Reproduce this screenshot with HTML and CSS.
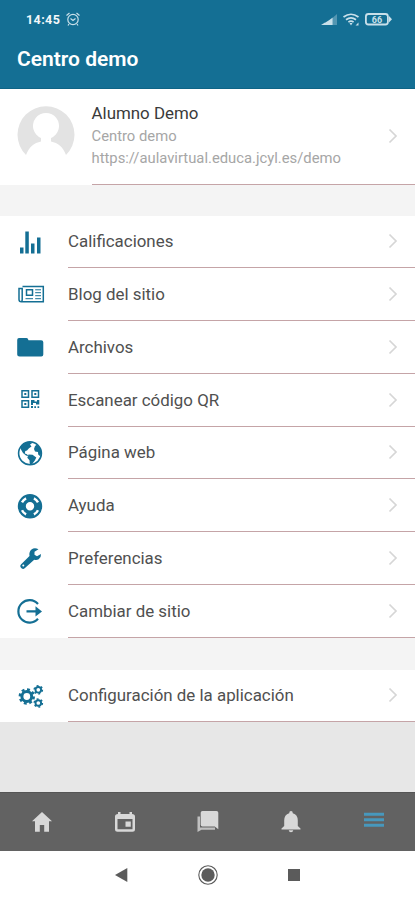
FILE: index.html
```html
<!DOCTYPE html>
<html lang="es">
<head>
<meta charset="utf-8">
<title>Centro demo</title>
<link rel="stylesheet" href="styles.css">
</head>
<body>
<svg class="defs" width="0" height="0"><defs>
<symbol id="chev" viewBox="0 0 12 18"><path d="M2.500 2.500l6.500 6.500-6.500 6.500" fill="none" stroke="currentColor" stroke-width="1.700"/></symbol>
</defs></svg>
<div class="app">
<header class="header">
  <div class="status">
    <span class="time">14:45</span>
    <svg class="alarm" width="16" height="16" viewBox="0 0 16 16" fill="none" stroke="currentColor" stroke-width="1.2"><circle cx="8" cy="8.5" r="5.2"/><path d="M1.5 4.5l3-2.5M14.5 4.5l-3-2.5M4 13l-1 1.5M12 13l1 1.5M5.5 7.5L8 9.5l2.5-2"/></svg>
    <svg class="signals" width="72" height="16" viewBox="0 0 72 16" fill="currentColor">
      <path d="M0 14l4-2.500V14zM4 11.700l4-2.500V14H4zM8 9.200l3.700-2.600V14H8z"/><path opacity=".35" d="M12 6.400l4-3.400v11h-4z"/>
      <g fill="none" stroke="currentColor" stroke-width="1.700"><path d="M22.500 6q7.500-5.500 15 0M25 8.700q5-3.700 10 0M27.400 11.200q2.600-2 5.200 0"/></g><path d="M28.500 12h3L30 14.500zM34.500 14.500l3-3v3z"/>
      <rect x="44.900" y="3" width="22" height="10.500" rx="2.500" fill="none" stroke="currentColor" stroke-width="1.800"/><path d="M68 5l3 3.200L68 11.500z"/>
      <text class="battery" x="55.900" y="11.500" text-anchor="middle">66</text>
    </svg>
  </div>
  <h1>Centro demo</h1>
</header>
<main>
<section class="profile">
  <svg class="avatar" width="58" height="58" viewBox="0 0 58 58"><path fill="#e3e3e3" d="M9 49A28.500 28.500 0 1 1 49 49C46 41 41 37 34 35.500V32A13 13 0 1 0 24 32v3.500C17 37 12 41 9 49z"/></svg>
  <div class="who">
    <div class="info"><h2>Alumno Demo</h2><p>Centro demo</p><p class="url">https://aulavirtual.educa.jcyl.es/demo</p></div>
    <svg class="chev"><use href="#chev"/></svg>
  </div>
</section>
<nav class="list">
  <a class="row"><svg class="icon" viewBox="0 0 28 28"><path d="M4 19.500h3.500v6H4zM9.300 3.500h3.500v22H9.300zM15 15.500h3.500v10H15zM21 9.500h3.500v16H21z"/></svg><span class="label"><b>Calificaciones</b><svg class="chev"><use href="#chev"/></svg></span></a>
  <a class="row"><svg class="icon" viewBox="0 0 28 28"><g fill="none" stroke="currentColor"><path stroke-width="1.500" d="M6.500 5.500h20.800v15.300H5.300q-2.300 0-2.300-2.300V7.500h3.200v11q0 2.300-1.500 2.300"/><path stroke-width="1.500" d="M10.500 8.800h6v5.500h-6z"/><path stroke-width="1" d="M19.200 8.800h5.800M19.200 11.700h5.800M19.200 14.700h5.800M9.500 17.700h7.500M19.200 17.700h5.800"/></g></svg><span class="label"><b>Blog del sitio</b><svg class="chev"><use href="#chev"/></svg></span></a>
  <a class="row"><svg class="icon" viewBox="0 0 28 28"><path d="M3 5h7.500q1.500 0 2 2.300h12.700q2.100 0 2.100 2v12.300q0 2-2 2H3.500q-2.300 0-2.300-2V7Q1.200 5 3 5z"/></svg><span class="label"><b>Archivos</b><svg class="chev"><use href="#chev"/></svg></span></a>
  <a class="row"><svg class="icon" viewBox="0 0 28 28"><g fill="none" stroke="currentColor" stroke-width="1.500"><path d="M6 4.800h6.500v6.500H6zM16 4.800h6.500v6.500H16zM6 14.700h6.500v6.500H6z"/></g><path d="M8.300 7h2v2h-2zM18.300 7h2v2h-2zM8.300 17h2v2h-2zM15 14h3.500v1.500H21V14h2.300v4.500H20V17h-3v2h-2zM15 20h2v2h-2zM18.300 20.300h1.700V22h-1.700zM21.500 20.300h1.700V22h-1.700z"/></svg><span class="label"><b>Escanear código QR</b><svg class="chev"><use href="#chev"/></svg></span></a>
  <a class="row"><svg class="icon" viewBox="0 0 28 28"><circle cx="14" cy="14.300" r="11.400" fill="none" stroke="currentColor" stroke-width="1.600"/><path d="M4 8Q7.500 3 13.500 2.700L16 4.200l-2 1.300 1.500 2-2.500 1.800-2 2.200-1.700.5-.5 2.500 2.200.8 1.500 2-2.500-.8-3-2.500L5 10.500zM12.500 15.500l4 .3 3.800 2.700-1.500 3-3 4-2 .3-.3-4.500-2.200-2.500zM19 7l2-1.500q3.500 2.500 4.300 7l-.8 5-2.300-2-.2-2.500-3-.5-1-2.500z"/></svg><span class="label"><b>Página web</b><svg class="chev"><use href="#chev"/></svg></span></a>
  <a class="row"><svg class="icon" viewBox="0 0 28 28"><circle cx="14" cy="14.300" r="8.200" fill="none" stroke="currentColor" stroke-width="8"/><g fill="none" stroke="#fff" stroke-width="2.400"><path d="M10.100 6.300a8.900 8.900 0 0 0-4.100 4.100M17.900 6.300a8.900 8.900 0 0 1 4.100 4.100M6 18.200a8.900 8.900 0 0 0 4.100 4.100M22 18.200a8.900 8.900 0 0 1-4.100 4.100"/></g></svg><span class="label"><b>Ayuda</b><svg class="chev"><use href="#chev"/></svg></span></a>
  <a class="row"><svg class="icon" viewBox="0 0 28 28"><path fill-rule="evenodd" d="M22.500 5.300l-4 2.500v3l2.500 1.500 4-2.400q.3 3.500-2.300 5.300-2 1.300-4.500.5L8.700 24.300q-1.500 1.500-3.200 0l-.7-.7q-1.300-1.500.1-3l8.600-8.500q-.8-4 2-6.500 3-2.300 7-.3zM6.300 21.600a1 1 0 1 0 2 0 1 1 0 1 0-2 0z"/></svg><span class="label"><b>Preferencias</b><svg class="chev"><use href="#chev"/></svg></span></a>
  <a class="row"><svg class="icon" viewBox="0 0 28 28"><path fill="none" stroke="currentColor" stroke-width="2.200" d="M22 7A11.200 11.200 0 1 0 22 21.800M10.500 14.400h11"/><path d="M19.500 9.200l6.500 5.200-6.500 5.200z"/></svg><span class="label"><b>Cambiar de sitio</b><svg class="chev"><use href="#chev"/></svg></span></a>
</nav>
<nav class="list settings">
  <a class="row"><svg class="icon" viewBox="0 0 28 28"><g fill="none" stroke="currentColor"><circle cx="10.800" cy="14.500" r="4.900" stroke-width="3"/><circle cx="10.800" cy="14.500" r="7" stroke-width="2.400" stroke-dasharray="2.900 2.600"/><circle cx="22.300" cy="7.800" r="2.800" stroke-width="1.900"/><circle cx="22.300" cy="7.800" r="4.100" stroke-width="1.500" stroke-dasharray="1.900 2.390"/><circle cx="22.300" cy="21" r="2.800" stroke-width="1.900"/><circle cx="22.300" cy="21" r="4.100" stroke-width="1.500" stroke-dasharray="1.900 2.390"/></g></svg><span class="label"><b>Configuración de la aplicación</b><svg class="chev"><use href="#chev"/></svg></span></a>
</nav>
</main>
<footer class="tabs">
  <a><svg viewBox="0 0 24 24"><path d="M12 2l10 9.300h-3V21.800h-4.800V15H9.800v6.800H5v-10.500H2z"/></svg></a>
  <a><svg viewBox="0 0 24 24"><path fill-rule="evenodd" d="M5 2h2.500v2h9V2H19v2q3 0 3 2.500v12.800q0 2.500-2.500 2.500h-15Q2 21.800 2 19.300V6.500Q2 4 5 4zM4.500 9v10.200h15V9zM12.500 11.500h5.300v5.200h-5.300z"/></svg></a>
  <a><svg viewBox="0 0 24 24"><path opacity=".8" d="M1.500 6.500H4v11h15v2.200H5.500L1.500 22z"/><path d="M6.500 1h14q1.800 0 1.800 1.800v16.500L18.800 16.500H6.500q-1.800 0-1.800-1.800V2.800Q4.700 1 6.500 1z"/></svg></a>
  <a><svg viewBox="0 0 24 24"><path d="M12 1q1.800 0 1.800 2.200 5 1.500 5 7.300v5.500l2.700 2.600v.9h-19v-.9L5.200 16v-5.500q0-5.800 5-7.300Q10.200 1 12 1zM9.700 20.300h4.600Q14 22.300 12 22.300t-2.300-2z"/></svg></a>
  <a class="active"><svg viewBox="0 0 24 24"><path d="M2 2.800h20v3H2zM2 8.300h20v3H2zM2 13.700h20v3H2z"/></svg></a>
</footer>
<div class="system">
  <svg viewBox="0 0 24 24"><path d="M5 12L17.300 5v14z"/></svg>
  <svg viewBox="0 0 24 24"><circle cx="12" cy="12" r="6.700"/><circle cx="12" cy="12" r="9.200" fill="none" stroke="currentColor" stroke-width="1.100"/></svg>
  <svg viewBox="0 0 24 24"><path d="M6 6h12v12H6z"/></svg>
</div>
</div>
</body>
</html>
```
FILE: styles.css
```css
* { box-sizing: border-box; }
body { margin: 0; font-family: Roboto, "Liberation Sans", sans-serif; background: #fff; }
.defs { display: block; height: 0; }
.app { width: 415px; height: 900px; display: flex; flex-direction: column; overflow: hidden; }
.header { height: 88.500px; flex: none; background: #146f94; color: #fff; border-bottom: 1px solid #0e6486; }
.status { height: 38px; display: flex; align-items: center; padding: 0 22px 0 26px; color: #c9e0ea; }
.time { font-size: 12.500px; font-weight: 700; letter-spacing: .4px; color: #f2f8fa; }
.alarm { margin-left: 5px; }
.signals { margin-left: auto; }
.battery { font-size: 9px; font-weight: 700; }
h1 { margin: 7px 0 0 17px; font-size: 21px; line-height: 28px; font-weight: 600; white-space: nowrap; }
main { flex: 1; background: #e7e7e7; min-height: 0; }
.profile { height: 96px; background: #fff; display: flex; padding-left: 17px; }
.avatar { margin-top: 17.500px; flex: none; }
.who { flex: 1; margin-left: 16.500px; border-bottom: 1.500px solid #c5a4a7; display: flex; justify-content: space-between; padding-right: 16px; }
.info { padding-top: 13px; white-space: nowrap; }
h2 { margin: 0; font-size: 16.900px; line-height: 23px; font-weight: 400; color: #3a3a3a; }
p { margin: 0; font-size: 14.800px; line-height: 22px; color: #a6a6a6; }
.chev { width: 12px; height: 18px; color: #d6d6d6; flex: none; }
.who .chev { margin-top: 38px; }
.list { border-top: 31px solid #f4f4f4; background: #fff; }
.list.settings { border-top-width: 32px; }
.row { height: 52.750px; display: flex; align-items: center; padding-left: 16px; color: #146f94; }
.icon { width: 28px; height: 28px; fill: currentColor; overflow: visible; flex: none; }
.label { flex: 1; height: 100%; margin-left: 24px; padding-right: 16px; border-bottom: 1.500px solid #c5a4a7; display: flex; align-items: center; justify-content: space-between; }
.label b { font-size: 16.900px; font-weight: 400; color: #505050; white-space: nowrap; }
.tabs { height: 58.500px; flex: none; background: #626262; border-top: 1px solid #555; display: flex; color: #d8d8d8; }
.tabs a { flex: 1; display: flex; align-items: center; justify-content: center; }
.tabs svg { width: 24px; height: 24px; fill: currentColor; }
.tabs .active { color: #4798bd; }
.system { height: 49.500px; flex: none; display: flex; justify-content: center; align-items: center; gap: 62px; color: #5b5b5b; }
.system svg { width: 24px; height: 24px; fill: currentColor; }
```
